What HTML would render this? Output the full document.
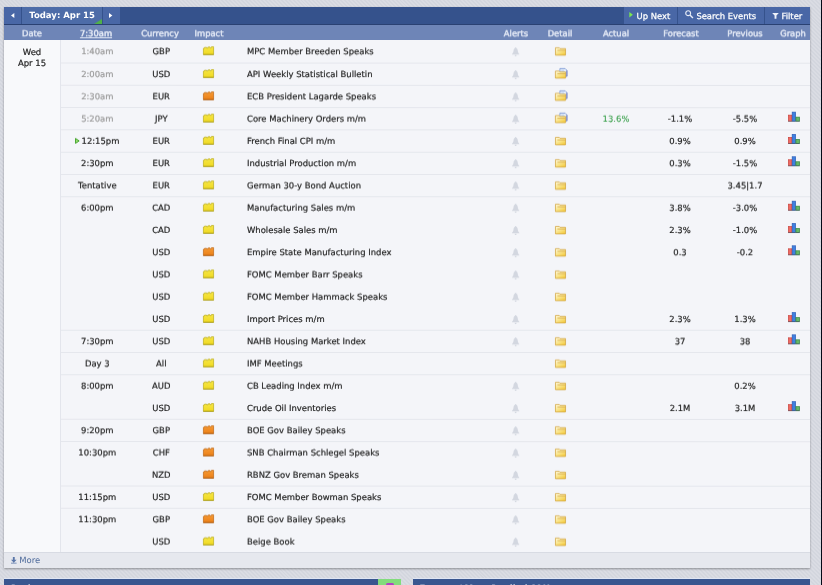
<!DOCTYPE html>
<html><head><meta charset="utf-8"><title>Calendar</title>
<style>
html,body{margin:0;padding:0;}
body{width:822px;height:585px;overflow:hidden;position:relative;
 font-family:"DejaVu Sans","Liberation Sans",sans-serif;font-size:8.45px;color:#222;text-rendering:geometricPrecision;
 background:#d6d9e0 repeating-linear-gradient(45deg,#dadce3 0,#dadce3 1.4px,#d3d6de 1.4px,#d3d6de 2.8px);}
#w{position:absolute;left:0;top:0;width:822px;height:585px;will-change:transform;overflow:hidden;}
.edge{position:absolute;left:820.8px;top:0;width:1.2px;height:585px;background:#050a18;z-index:5;}
.cal{position:absolute;left:4px;top:7px;width:806px;height:561px;background:#f4f5f9;box-shadow:0 1px 2px rgba(0,0,0,.35);}
.hd{position:absolute;left:0;top:0;width:806px;height:18px;background:#35528c;border-bottom:1px solid #2a4172;box-sizing:border-box;}
.sub{position:absolute;left:0;top:18px;width:806px;height:15px;background:#6e85b7;}
.subt{position:absolute;left:0;top:0;width:806px;height:15px;will-change:transform;transform:translateY(0.3px) rotate(0.005deg);}
.sub span{position:absolute;top:1px;line-height:15px;-webkit-text-stroke:0.4px #dde4f3;color:#e8ecf5;font-size:8.4px;transform:translateX(-50%);white-space:nowrap;}
.btn{position:absolute;top:0;height:17px;background:#4967a6;color:#fff;font-weight:bold;font-size:8.6px;line-height:17px;white-space:nowrap;}
.nb{font-weight:normal;font-size:8.4px;-webkit-text-stroke:0.25px #fff;}
.nb span{top:0.7px}
.datecol{position:absolute;left:0;top:33px;width:57px;height:512px;background:#f8f9fb;border-right:1px solid #e3e5ec;box-sizing:border-box;}
.datecol div{position:absolute;left:0;width:56px;text-align:center;font-size:8.5px;line-height:11px;color:#222;-webkit-text-stroke:0.18px #222;}
.r{will-change:transform;position:absolute;left:56px;top:0;width:750px;height:22.26px;}
.r span{position:absolute;top:0px;line-height:22px;white-space:nowrap;-webkit-text-stroke:0.18px currentColor;}
.sep{will-change:transform;position:absolute;left:57px;top:0;width:749px;height:1px;background:#e5e7ed;}
.t{left:1.3px;width:72px;text-align:center;color:#222;}
.t.past{color:#999;}
.cur{left:73.3px;width:56px;text-align:center;}
.ev{left:187px;}
.r span.act{left:526px;width:60px;text-align:center;color:#2e9a40;-webkit-text-stroke:0.05px #2e9a40;}
.fc{left:590px;width:60px;text-align:center;}
.pv{left:655px;width:60px;text-align:center;}
svg{position:absolute;overflow:visible;}
.imp{left:143.1px;top:6.4px;width:11px;height:8.7px;}
.bell{left:452px;top:6.5px;width:7.3px;height:9.1px;}
.fold{left:495px;top:7.2px;width:11px;height:8.3px;}
.fold.o{top:5.1px;width:12.3px;height:10.4px;}
.gr{left:728px;top:4.1px;width:11.9px;height:10px;}
.nx{position:static;display:inline-block;width:4.7px;height:6px;margin-right:1.7px;vertical-align:-0.1px;}
.ft{position:absolute;left:0;top:545px;width:806px;height:16px;background:#e6e8ee;border-top:1px solid #d8dbe3;box-sizing:border-box;color:#506c9c;line-height:15px;}
.pn{position:absolute;top:578px;height:10px;border-top:1px solid #dfe5f3;background:#39568f;color:#fff;font-weight:bold;font-size:8.6px;line-height:14px;overflow:hidden;}
</style></head><body>
<svg width="0" height="0" style="position:absolute">
<defs>
<linearGradient id="gy" x1="0" y1="0" x2="0" y2="1"><stop offset="0" stop-color="#f6e645"/><stop offset="1" stop-color="#f0d922"/></linearGradient>
<linearGradient id="go" x1="0" y1="0" x2="0" y2="1"><stop offset="0" stop-color="#f79a33"/><stop offset="1" stop-color="#ea7f18"/></linearGradient>
<g id="impy"><path d="M0.4 8.3V2.1L1.3 2.1L1.5 1.2L3.5 1.1L3.7 1.9L4.7 1.9L4.9 0.9L7 0.8L7.2 1.7L8.2 1.7L8.4 0.6L10.6 0.5V8.3Z" fill="url(#gy)" stroke="#bcae20" stroke-width="0.75"/><path d="M0.2 8.3H10.8" stroke="#a09210" stroke-width="0.7"/></g>
<g id="impo"><path d="M0.4 8.3V2.1L1.3 2.1L1.5 1.2L3.5 1.1L3.7 1.9L4.7 1.9L4.9 0.9L7 0.8L7.2 1.7L8.2 1.7L8.4 0.6L10.6 0.5V8.3Z" fill="url(#go)" stroke="#c06a18" stroke-width="0.75"/><path d="M0.2 8.3H10.8" stroke="#a4540c" stroke-width="0.7"/></g>
<g id="bell"><path d="M3.65 0c0.45 0 0.7 0.3 0.75 0.75c0.9 0.5 1.25 1.4 1.35 2.5c0.15 1.7 0.6 2.5 1.55 3.4v0.55h-7.3v-0.55c0.95-0.9 1.4-1.7 1.55-3.4c0.1-1.1 0.45-2 1.35-2.5c0.05-0.45 0.3-0.75 0.75-0.75zM2.7 7.8h1.9c0 0.8-0.4 1.3-0.95 1.3s-0.95-0.5-0.95-1.3z" fill="#d3d7e0"/></g>
<linearGradient id="fg" x1="0.1" y1="0" x2="0.8" y2="1"><stop offset="0" stop-color="#fef7d8"/><stop offset="0.45" stop-color="#fae896"/><stop offset="1" stop-color="#f3c93c"/></linearGradient>
<g id="foldf"><path d="M0.4 0.4h3.8l0.7 0.9h5.7v6.7h-10.2z" fill="url(#fg)" stroke="#d3a846" stroke-width="0.8"/><path d="M2.4 3.1h8" stroke="#d0a038" stroke-width="0.7"/></g>
<g id="foldo"><path d="M4.9 0.4h5.2l1.8 1.8v6h-7z" fill="#eaf1fb" stroke="#6f8fd0" stroke-width="0.8"/><path d="M6.2 2.2h3M6.2 3.6h4" stroke="#9fbbe8" stroke-width="0.7"/><path d="M11.9 2.4v5.8" stroke="#4a4a9a" stroke-width="0.6"/><path d="M0.4 2.9h3.8l0.7 0.9h5.7v6.2h-10.2z" fill="url(#fg)" stroke="#d3a846" stroke-width="0.8"/><path d="M2.4 5.6h8" stroke="#d0a038" stroke-width="0.7"/></g>
<g id="gr"><rect x="0.4" y="3.4" width="3.6" height="6.2" fill="#ee6a62" stroke="#c8443e" stroke-width="0.7"/><rect x="4.2" y="0.4" width="3.4" height="9.2" fill="#3f80e0" stroke="#2a5cb8" stroke-width="0.7"/><rect x="7.9" y="5.4" width="3.6" height="4.2" fill="#66b866" stroke="#2f8040" stroke-width="0.7"/><rect x="0" y="9.3" width="11.9" height="0.7" fill="#3a4a5a" opacity="0.7"/></g>
</defs></svg>
<div class="edge"></div>
<div id="w">
<div class="cal">
 <div class="hd">
  <div class="btn" style="left:0;width:17.3px;"><svg viewBox="0 0 4 6" style="left:6.7px;top:5.8px;width:3.3px;height:5.1px"><path d="M4 0L0 3L4 6Z" fill="#fff"/></svg></div>
  <div class="btn" style="left:18.1px;width:79.9px;background:#4d6ca8;font-size:8.5px;"><span style="position:absolute;left:7.2px;top:0.8px">Today: Apr 15</span><svg viewBox="0 0 8 5" style="right:0;bottom:0;width:8px;height:5px"><path d="M8 0V5H0Z" fill="#4fb04a"/></svg></div>
  <div class="btn" style="left:98.8px;width:17.4px;"><svg viewBox="0 0 4 6" style="left:6.6px;top:5.8px;width:3.4px;height:5.1px"><path d="M0 0L4 3L0 6Z" fill="#fff"/></svg></div>
  <div class="btn nb" style="left:620px;width:53px;"><svg viewBox="0 0 4 6" style="left:5.2px;top:4.6px;width:4.2px;height:5.4px"><path d="M0 0L4 3L0 6Z" fill="#7be650"/></svg><span style="position:absolute;left:12.6px">Up Next</span></div>
  <div class="btn nb" style="left:674px;width:86px;"><svg viewBox="0 0 9 9" style="left:6.8px;top:3.3px;width:8.4px;height:8.4px"><circle cx="3.4" cy="3.4" r="2.6" fill="none" stroke="#e8edf7" stroke-width="1.2"/><path d="M5.3 5.3L8.5 8.5" stroke="#e8edf7" stroke-width="1.5"/></svg><span style="position:absolute;left:18.4px">Search Events</span></div>
  <div class="btn nb" style="left:761px;width:45px;"><svg viewBox="0 0 7 6" style="left:7px;top:6px;width:7px;height:5.7px"><path d="M0 0H7L4.5 2.7V6H2.5V2.7Z" fill="#eef2fa"/></svg><span style="position:absolute;left:16.5px">Filter</span></div>
 </div>
 <div class="sub"><div class="subt">
  <span style="left:28px">Date</span>
  <span style="left:92px;text-decoration:underline;color:#fff">7:30am</span>
  <span style="left:156px">Currency</span>
  <span style="left:205px">Impact</span>
  <span style="left:512px">Alerts</span>
  <span style="left:556px">Detail</span>
  <span style="left:612px">Actual</span>
  <span style="left:677px">Forecast</span>
  <span style="left:741px">Previous</span>
  <span style="left:789px">Graph</span>
 </div></div>
 <div class="datecol"><div style="top:7.7px">Wed</div><div style="top:18.7px">Apr 15</div></div>
</div>
<div style="position:absolute;left:4px;top:0;width:806px;height:585px;">
<div class="r" style="transform:translateY(40.30px) rotate(0.01deg)"><span class="t past">1:40am</span><span class="cur">GBP</span><svg class="imp" viewBox="0 0 11 8.7"><use href="#impy"/></svg><span class="ev">MPC Member Breeden Speaks</span><svg class="bell" viewBox="0 0 7.3 9.1"><use href="#bell"/></svg><svg class="fold" viewBox="0 0 11 8.4"><use href="#foldf"/></svg></div>
<i class="sep" style="transform:translateY(62.66px) rotate(0.01deg)"></i><div class="r" style="transform:translateY(63.16px) rotate(0.01deg)"><span class="t past">2:00am</span><span class="cur">USD</span><svg class="imp" viewBox="0 0 11 8.7"><use href="#impy"/></svg><span class="ev">API Weekly Statistical Bulletin</span><svg class="bell" viewBox="0 0 7.3 9.1"><use href="#bell"/></svg><svg class="fold o" viewBox="0 0 12.3 10.4"><use href="#foldo"/></svg></div>
<i class="sep" style="transform:translateY(84.92px) rotate(0.01deg)"></i><div class="r" style="transform:translateY(85.42px) rotate(0.01deg)"><span class="t past">2:30am</span><span class="cur">EUR</span><svg class="imp" viewBox="0 0 11 8.7"><use href="#impo"/></svg><span class="ev">ECB President Lagarde Speaks</span><svg class="bell" viewBox="0 0 7.3 9.1"><use href="#bell"/></svg><svg class="fold o" viewBox="0 0 12.3 10.4"><use href="#foldo"/></svg></div>
<i class="sep" style="transform:translateY(107.18px) rotate(0.01deg)"></i><div class="r" style="transform:translateY(107.68px) rotate(0.01deg)"><span class="t past">5:20am</span><span class="cur">JPY</span><svg class="imp" viewBox="0 0 11 8.7"><use href="#impy"/></svg><span class="ev">Core Machinery Orders m/m</span><svg class="bell" viewBox="0 0 7.3 9.1"><use href="#bell"/></svg><svg class="fold o" viewBox="0 0 12.3 10.4"><use href="#foldo"/></svg><span class="act">13.6%</span><span class="fc">-1.1%</span><span class="pv">-5.5%</span><svg class="gr" viewBox="0 0 11.9 10"><use href="#gr"/></svg></div>
<i class="sep" style="transform:translateY(129.44px) rotate(0.01deg)"></i><div class="r" style="transform:translateY(129.94px) rotate(0.01deg)"><span class="t next"><svg class="nx" viewBox="0 0 4.4 5.6"><path d="M0.5 0.5L3.9 2.8L0.5 5.1Z" fill="#9ae070" stroke="#3fa02a" stroke-width="0.9" stroke-linejoin="round"/></svg>12:15pm</span><span class="cur">EUR</span><svg class="imp" viewBox="0 0 11 8.7"><use href="#impy"/></svg><span class="ev">French Final CPI m/m</span><svg class="bell" viewBox="0 0 7.3 9.1"><use href="#bell"/></svg><svg class="fold" viewBox="0 0 11 8.4"><use href="#foldf"/></svg><span class="fc">0.9%</span><span class="pv">0.9%</span><svg class="gr" viewBox="0 0 11.9 10"><use href="#gr"/></svg></div>
<i class="sep" style="transform:translateY(151.70px) rotate(0.01deg)"></i><div class="r" style="transform:translateY(152.20px) rotate(0.01deg)"><span class="t ">2:30pm</span><span class="cur">EUR</span><svg class="imp" viewBox="0 0 11 8.7"><use href="#impy"/></svg><span class="ev">Industrial Production m/m</span><svg class="bell" viewBox="0 0 7.3 9.1"><use href="#bell"/></svg><svg class="fold" viewBox="0 0 11 8.4"><use href="#foldf"/></svg><span class="fc">0.3%</span><span class="pv">-1.5%</span><svg class="gr" viewBox="0 0 11.9 10"><use href="#gr"/></svg></div>
<i class="sep" style="transform:translateY(173.96px) rotate(0.01deg)"></i><div class="r" style="transform:translateY(174.46px) rotate(0.01deg)"><span class="t ">Tentative</span><span class="cur">EUR</span><svg class="imp" viewBox="0 0 11 8.7"><use href="#impy"/></svg><span class="ev">German 30-y Bond Auction</span><svg class="bell" viewBox="0 0 7.3 9.1"><use href="#bell"/></svg><svg class="fold" viewBox="0 0 11 8.4"><use href="#foldf"/></svg><span class="pv">3.45|1.7</span></div>
<i class="sep" style="transform:translateY(196.22px) rotate(0.01deg)"></i><div class="r" style="transform:translateY(196.72px) rotate(0.01deg)"><span class="t ">6:00pm</span><span class="cur">CAD</span><svg class="imp" viewBox="0 0 11 8.7"><use href="#impy"/></svg><span class="ev">Manufacturing Sales m/m</span><svg class="bell" viewBox="0 0 7.3 9.1"><use href="#bell"/></svg><svg class="fold" viewBox="0 0 11 8.4"><use href="#foldf"/></svg><span class="fc">3.8%</span><span class="pv">-3.0%</span><svg class="gr" viewBox="0 0 11.9 10"><use href="#gr"/></svg></div>
<div class="r" style="transform:translateY(218.98px) rotate(0.01deg)"><span class="cur">CAD</span><svg class="imp" viewBox="0 0 11 8.7"><use href="#impy"/></svg><span class="ev">Wholesale Sales m/m</span><svg class="bell" viewBox="0 0 7.3 9.1"><use href="#bell"/></svg><svg class="fold" viewBox="0 0 11 8.4"><use href="#foldf"/></svg><span class="fc">2.3%</span><span class="pv">-1.0%</span><svg class="gr" viewBox="0 0 11.9 10"><use href="#gr"/></svg></div>
<div class="r" style="transform:translateY(241.24px) rotate(0.01deg)"><span class="cur">USD</span><svg class="imp" viewBox="0 0 11 8.7"><use href="#impo"/></svg><span class="ev">Empire State Manufacturing Index</span><svg class="bell" viewBox="0 0 7.3 9.1"><use href="#bell"/></svg><svg class="fold" viewBox="0 0 11 8.4"><use href="#foldf"/></svg><span class="fc">0.3</span><span class="pv">-0.2</span><svg class="gr" viewBox="0 0 11.9 10"><use href="#gr"/></svg></div>
<div class="r" style="transform:translateY(263.50px) rotate(0.01deg)"><span class="cur">USD</span><svg class="imp" viewBox="0 0 11 8.7"><use href="#impy"/></svg><span class="ev">FOMC Member Barr Speaks</span><svg class="bell" viewBox="0 0 7.3 9.1"><use href="#bell"/></svg><svg class="fold" viewBox="0 0 11 8.4"><use href="#foldf"/></svg></div>
<div class="r" style="transform:translateY(285.76px) rotate(0.01deg)"><span class="cur">USD</span><svg class="imp" viewBox="0 0 11 8.7"><use href="#impy"/></svg><span class="ev">FOMC Member Hammack Speaks</span><svg class="bell" viewBox="0 0 7.3 9.1"><use href="#bell"/></svg><svg class="fold" viewBox="0 0 11 8.4"><use href="#foldf"/></svg></div>
<div class="r" style="transform:translateY(308.02px) rotate(0.01deg)"><span class="cur">USD</span><svg class="imp" viewBox="0 0 11 8.7"><use href="#impy"/></svg><span class="ev">Import Prices m/m</span><svg class="bell" viewBox="0 0 7.3 9.1"><use href="#bell"/></svg><svg class="fold" viewBox="0 0 11 8.4"><use href="#foldf"/></svg><span class="fc">2.3%</span><span class="pv">1.3%</span><svg class="gr" viewBox="0 0 11.9 10"><use href="#gr"/></svg></div>
<i class="sep" style="transform:translateY(329.78px) rotate(0.01deg)"></i><div class="r" style="transform:translateY(330.28px) rotate(0.01deg)"><span class="t ">7:30pm</span><span class="cur">USD</span><svg class="imp" viewBox="0 0 11 8.7"><use href="#impy"/></svg><span class="ev">NAHB Housing Market Index</span><svg class="bell" viewBox="0 0 7.3 9.1"><use href="#bell"/></svg><svg class="fold" viewBox="0 0 11 8.4"><use href="#foldf"/></svg><span class="fc">37</span><span class="pv">38</span><svg class="gr" viewBox="0 0 11.9 10"><use href="#gr"/></svg></div>
<i class="sep" style="transform:translateY(352.04px) rotate(0.01deg)"></i><div class="r" style="transform:translateY(352.54px) rotate(0.01deg)"><span class="t ">Day 3</span><span class="cur">All</span><svg class="imp" viewBox="0 0 11 8.7"><use href="#impy"/></svg><span class="ev">IMF Meetings</span><svg class="fold" viewBox="0 0 11 8.4"><use href="#foldf"/></svg></div>
<i class="sep" style="transform:translateY(374.30px) rotate(0.01deg)"></i><div class="r" style="transform:translateY(374.80px) rotate(0.01deg)"><span class="t ">8:00pm</span><span class="cur">AUD</span><svg class="imp" viewBox="0 0 11 8.7"><use href="#impy"/></svg><span class="ev">CB Leading Index m/m</span><svg class="bell" viewBox="0 0 7.3 9.1"><use href="#bell"/></svg><svg class="fold" viewBox="0 0 11 8.4"><use href="#foldf"/></svg><span class="pv">0.2%</span></div>
<div class="r" style="transform:translateY(397.06px) rotate(0.01deg)"><span class="cur">USD</span><svg class="imp" viewBox="0 0 11 8.7"><use href="#impy"/></svg><span class="ev">Crude Oil Inventories</span><svg class="bell" viewBox="0 0 7.3 9.1"><use href="#bell"/></svg><svg class="fold" viewBox="0 0 11 8.4"><use href="#foldf"/></svg><span class="fc">2.1M</span><span class="pv">3.1M</span><svg class="gr" viewBox="0 0 11.9 10"><use href="#gr"/></svg></div>
<i class="sep" style="transform:translateY(418.82px) rotate(0.01deg)"></i><div class="r" style="transform:translateY(419.32px) rotate(0.01deg)"><span class="t ">9:20pm</span><span class="cur">GBP</span><svg class="imp" viewBox="0 0 11 8.7"><use href="#impo"/></svg><span class="ev">BOE Gov Bailey Speaks</span><svg class="bell" viewBox="0 0 7.3 9.1"><use href="#bell"/></svg><svg class="fold" viewBox="0 0 11 8.4"><use href="#foldf"/></svg></div>
<i class="sep" style="transform:translateY(441.08px) rotate(0.01deg)"></i><div class="r" style="transform:translateY(441.58px) rotate(0.01deg)"><span class="t ">10:30pm</span><span class="cur">CHF</span><svg class="imp" viewBox="0 0 11 8.7"><use href="#impo"/></svg><span class="ev">SNB Chairman Schlegel Speaks</span><svg class="bell" viewBox="0 0 7.3 9.1"><use href="#bell"/></svg><svg class="fold" viewBox="0 0 11 8.4"><use href="#foldf"/></svg></div>
<div class="r" style="transform:translateY(463.84px) rotate(0.01deg)"><span class="cur">NZD</span><svg class="imp" viewBox="0 0 11 8.7"><use href="#impo"/></svg><span class="ev">RBNZ Gov Breman Speaks</span><svg class="bell" viewBox="0 0 7.3 9.1"><use href="#bell"/></svg><svg class="fold" viewBox="0 0 11 8.4"><use href="#foldf"/></svg></div>
<i class="sep" style="transform:translateY(485.60px) rotate(0.01deg)"></i><div class="r" style="transform:translateY(486.10px) rotate(0.01deg)"><span class="t ">11:15pm</span><span class="cur">USD</span><svg class="imp" viewBox="0 0 11 8.7"><use href="#impy"/></svg><span class="ev">FOMC Member Bowman Speaks</span><svg class="bell" viewBox="0 0 7.3 9.1"><use href="#bell"/></svg><svg class="fold" viewBox="0 0 11 8.4"><use href="#foldf"/></svg></div>
<i class="sep" style="transform:translateY(507.86px) rotate(0.01deg)"></i><div class="r" style="transform:translateY(508.36px) rotate(0.01deg)"><span class="t ">11:30pm</span><span class="cur">GBP</span><svg class="imp" viewBox="0 0 11 8.7"><use href="#impo"/></svg><span class="ev">BOE Gov Bailey Speaks</span><svg class="bell" viewBox="0 0 7.3 9.1"><use href="#bell"/></svg><svg class="fold" viewBox="0 0 11 8.4"><use href="#foldf"/></svg></div>
<div class="r" style="transform:translateY(530.62px) rotate(0.01deg)"><span class="cur">USD</span><svg class="imp" viewBox="0 0 11 8.7"><use href="#impy"/></svg><span class="ev">Beige Book</span><svg class="bell" viewBox="0 0 7.3 9.1"><use href="#bell"/></svg><svg class="fold" viewBox="0 0 11 8.4"><use href="#foldf"/></svg></div>
</div>
<div class="cal" style="background:none;box-shadow:none;pointer-events:none"><div class="ft"><svg viewBox="0 0 6 7" style="left:6.9px;top:4.3px;width:5.6px;height:6.6px"><path d="M2 0h2v3h2l-3 3l-3-3h2zM0 6.2h6v0.8h-6z" fill="#5a76a8"/></svg><span style="position:absolute;left:15.3px;top:0.3px">More</span></div></div>
<div class="pn" style="left:4px;width:374px;"><span style="position:absolute;left:7px;top:2.9px">Brokers</span></div>
<div style="position:absolute;left:378px;top:578.5px;width:23.4px;height:10px;background:#82dc7c;"><div style="position:absolute;left:7.5px;top:4.5px;width:8.5px;height:6px;background:#b044c4;border-radius:1.5px 1.5px 0 0"></div></div>
<div class="pn" style="left:413px;width:397px;"><span style="position:absolute;left:6.6px;top:2.9px">Forums / Most Replied 12H</span></div>
</div>
</body></html>
